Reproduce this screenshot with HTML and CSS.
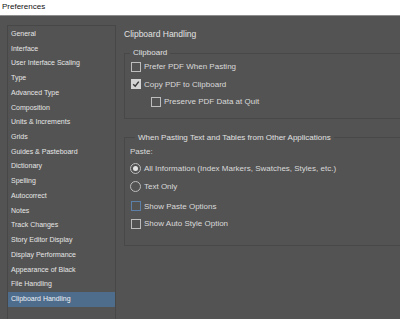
FILE: index.html
```html
<!DOCTYPE html>
<html>
<head>
<meta charset="utf-8">
<link rel="stylesheet" href="styles.css">
</head>
<body>
<div class="titlebar">Preferences</div>
<div class="main">
  <ul class="sidebar">
    <li>General</li>
    <li>Interface</li>
    <li>User Interface Scaling</li>
    <li>Type</li>
    <li>Advanced Type</li>
    <li>Composition</li>
    <li>Units &amp; Increments</li>
    <li>Grids</li>
    <li>Guides &amp; Pasteboard</li>
    <li>Dictionary</li>
    <li>Spelling</li>
    <li>Autocorrect</li>
    <li>Notes</li>
    <li>Track Changes</li>
    <li>Story Editor Display</li>
    <li>Display Performance</li>
    <li>Appearance of Black</li>
    <li>File Handling</li>
    <li class="selected">Clipboard Handling</li>
  </ul>
  <div class="content">
    <div class="heading">Clipboard Handling</div>
    <fieldset class="group group-clip">
      <legend>Clipboard</legend>
      <div class="row"><span class="box"></span>Prefer PDF When Pasting</div>
      <div class="row"><span class="box checked"><svg width="8" height="8" viewBox="0 0 8 8"><polyline points="1.2,4.2 3.2,6.2 6.8,1.6" fill="none" stroke="#3a3a3a" stroke-width="1.5"/></svg></span>Copy PDF to Clipboard</div>
      <div class="row indent"><span class="box"></span>Preserve PDF Data at Quit</div>
    </fieldset>
    <fieldset class="group group-paste">
      <legend>When Pasting Text and Tables from Other Applications</legend>
      <div class="row">Paste:</div>
      <div class="row"><span class="radio on"></span>All Information (Index Markers, Swatches, Styles, etc.)</div>
      <div class="row"><span class="radio"></span>Text Only</div>
      <div class="row gap"><span class="box focus"></span>Show Paste Options</div>
      <div class="row"><span class="box"></span>Show Auto Style Option</div>
    </fieldset>
  </div>
</div>
</body>
</html>
```

FILE: styles.css
```css
html, body {
  margin: 0;
  padding: 0;
  height: 100%;
  overflow: hidden;
}
body {
  background: #535353;
  font-family: "Liberation Sans", Arial, sans-serif;
  color: #dadada;
}
.titlebar {
  background: #ffffff;
  color: #111;
  height: 15px;
  line-height: 14px;
  font-size: 8px;
  padding-left: 2px;
  border-bottom: 1px solid #8e8e8e;
}
.main {
  display: flex;
  align-items: flex-start;
  padding: 9px 0 0 7px;
  height: calc(100vh - 16px);
  box-sizing: border-box;
  overflow: hidden;
}
.sidebar {
  list-style: none;
  margin: 0;
  padding: 1px 0 30px 0;
  width: 107px;
  flex: none;
  border: 1px solid #474747;
}
.sidebar li {
  height: 14.72px;
  line-height: 14.72px;
  font-size: 7px;
  padding-left: 3px;
  color: #e6e6e6;
  white-space: nowrap;
}
.sidebar li.selected {
  background: #4e6c8c;
  color: #eef2f6;
}
.content {
  flex: none;
  width: 300px;
  margin-left: 8px;
}
.heading {
  font-size: 8.5px;
  line-height: 18px;
  color: #e2e2e2;
}
.group {
  margin: 5px 0 0 0;
  padding: 0 0 7px 5px;
  border: 1px solid #484848;
  min-width: 0;
}
.group legend {
  font-size: 8px;
  line-height: 10px;
  padding: 0 3px;
  color: #e0e0e0;
}
.group-paste {
  margin-top: 14px;
  padding-bottom: 12px;
}
.group-paste legend {
  margin-left: 5px;
}
.row {
  display: flex;
  align-items: center;
  height: 17.5px;
  font-size: 8px;
  white-space: nowrap;
}
.row.indent {
  padding-left: 20px;
}
.row.gap {
  margin-top: 2.5px;
}
.box {
  box-sizing: border-box;
  width: 10px;
  height: 10px;
  border: 1px solid #bdbdbd;
  margin: 0 3px 0 1px;
  display: flex;
  align-items: center;
  justify-content: center;
  flex: none;
}
.box.checked {
  background: #d4d4d4;
  border-color: #d4d4d4;
}
.box.focus {
  border-color: #5d80a8;
}
.radio {
  box-sizing: border-box;
  width: 11px;
  height: 11px;
  border: 1px solid #bdbdbd;
  border-radius: 50%;
  margin-right: 3px;
  display: flex;
  align-items: center;
  justify-content: center;
  flex: none;
}
.radio.on::after {
  content: "";
  width: 5px;
  height: 5px;
  border-radius: 50%;
  background: #e4e4e4;
}
```
